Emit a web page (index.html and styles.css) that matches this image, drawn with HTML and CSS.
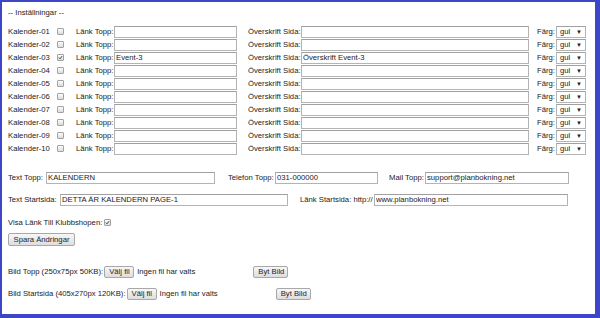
FILE: index.html
```html
<!doctype html>
<html lang="sv">
<head>
  <meta charset="utf-8" />
  <meta name="viewport" content="width=device-width,initial-scale=1" />
  <title>Inställningar</title>
  <link rel="stylesheet" href="styles.css">
</head>
<body>
  <div class="frame">
    <div class="heading">-- Inställningar --</div>

    <div class="cal-list">
      <div class="cal-row">
        <span class="cal-name">Kalender-01</span><span class="cb"></span>
        <span class="lbl lbl-link">Länk Topp:</span><input class="in in-link" type="text">
        <span class="lbl lbl-head">Överskrift Sida:</span><input class="in in-head" type="text">
        <span class="lbl lbl-color">Färg:</span><span class="sel">gul<span class="arrow">▼</span></span>
      </div>
      <div class="cal-row">
        <span class="cal-name">Kalender-02</span><span class="cb"></span>
        <span class="lbl lbl-link">Länk Topp:</span><input class="in in-link" type="text">
        <span class="lbl lbl-head">Överskrift Sida:</span><input class="in in-head" type="text">
        <span class="lbl lbl-color">Färg:</span><span class="sel">gul<span class="arrow">▼</span></span>
      </div>
      <div class="cal-row">
        <span class="cal-name">Kalender-03</span><span class="cb checked"><svg viewBox="0 0 8 8"><path d="M1.5 4.2 L3.2 6 L6.6 1.8" /></svg></span>
        <span class="lbl lbl-link">Länk Topp:</span><input class="in in-link" type="text" value="Event-3">
        <span class="lbl lbl-head">Överskrift Sida:</span><input class="in in-head" type="text" value="Överskrift Event-3">
        <span class="lbl lbl-color">Färg:</span><span class="sel">gul<span class="arrow">▼</span></span>
      </div>
      <div class="cal-row">
        <span class="cal-name">Kalender-04</span><span class="cb"></span>
        <span class="lbl lbl-link">Länk Topp:</span><input class="in in-link" type="text">
        <span class="lbl lbl-head">Överskrift Sida:</span><input class="in in-head" type="text">
        <span class="lbl lbl-color">Färg:</span><span class="sel">gul<span class="arrow">▼</span></span>
      </div>
      <div class="cal-row">
        <span class="cal-name">Kalender-05</span><span class="cb"></span>
        <span class="lbl lbl-link">Länk Topp:</span><input class="in in-link" type="text">
        <span class="lbl lbl-head">Överskrift Sida:</span><input class="in in-head" type="text">
        <span class="lbl lbl-color">Färg:</span><span class="sel">gul<span class="arrow">▼</span></span>
      </div>
      <div class="cal-row">
        <span class="cal-name">Kalender-06</span><span class="cb"></span>
        <span class="lbl lbl-link">Länk Topp:</span><input class="in in-link" type="text">
        <span class="lbl lbl-head">Överskrift Sida:</span><input class="in in-head" type="text">
        <span class="lbl lbl-color">Färg:</span><span class="sel">gul<span class="arrow">▼</span></span>
      </div>
      <div class="cal-row">
        <span class="cal-name">Kalender-07</span><span class="cb"></span>
        <span class="lbl lbl-link">Länk Topp:</span><input class="in in-link" type="text">
        <span class="lbl lbl-head">Överskrift Sida:</span><input class="in in-head" type="text">
        <span class="lbl lbl-color">Färg:</span><span class="sel">gul<span class="arrow">▼</span></span>
      </div>
      <div class="cal-row">
        <span class="cal-name">Kalender-08</span><span class="cb"></span>
        <span class="lbl lbl-link">Länk Topp:</span><input class="in in-link" type="text">
        <span class="lbl lbl-head">Överskrift Sida:</span><input class="in in-head" type="text">
        <span class="lbl lbl-color">Färg:</span><span class="sel">gul<span class="arrow">▼</span></span>
      </div>
      <div class="cal-row">
        <span class="cal-name">Kalender-09</span><span class="cb"></span>
        <span class="lbl lbl-link">Länk Topp:</span><input class="in in-link" type="text">
        <span class="lbl lbl-head">Överskrift Sida:</span><input class="in in-head" type="text">
        <span class="lbl lbl-color">Färg:</span><span class="sel">gul<span class="arrow">▼</span></span>
      </div>
      <div class="cal-row">
        <span class="cal-name">Kalender-10</span><span class="cb"></span>
        <span class="lbl lbl-link">Länk Topp:</span><input class="in in-link" type="text">
        <span class="lbl lbl-head">Överskrift Sida:</span><input class="in in-head" type="text">
        <span class="lbl lbl-color">Färg:</span><span class="sel">gul<span class="arrow">▼</span></span>
      </div>
    </div>

    <div class="row row-top">
      <span class="lbl w-texttop">Text Topp:</span><input class="in w-in-texttop" type="text" value="KALENDERN">
      <span class="lbl w-phone">Telefon Topp:</span><input class="in w-in-phone" type="text" value="031-000000">
      <span class="lbl w-mail">Mail Topp:</span><input class="in w-in-mail" type="text" value="support@planbokning.net">
    </div>

    <div class="row row-start">
      <span class="lbl w-textstart">Text Startsida:</span><input class="in w-in-textstart" type="text" value="DETTA ÄR KALENDERN PAGE-1">
      <span class="lbl w-linkstart">Länk Startsida: http://</span><input class="in w-in-linkstart" type="text" value="www.planbokning.net">
    </div>

    <div class="row row-shop">
      <span>Visa Länk Till Klubbshopen:</span><span class="cb checked"><svg viewBox="0 0 8 8"><path d="M1.5 4.2 L3.2 6 L6.6 1.8" /></svg></span>
    </div>

    <div class="row row-save">
      <button class="btn btn-save" type="button">Spara Ändringar</button>
    </div>

    <div class="row row-file first">
      <span>Bild Topp (250x75px 50KB):</span>
      <button class="btn btn-pick" type="button">Välj fil</button>
      <span class="nofile">Ingen fil har valts</span>
      <button class="btn btn-swap" type="button">Byt Bild</button>
    </div>

    <div class="row row-file second">
      <span>Bild Startsida (405x270px 120KB):</span>
      <button class="btn btn-pick" type="button">Välj fil</button>
      <span class="nofile">Ingen fil har valts</span>
      <button class="btn btn-swap" type="button">Byt Bild</button>
    </div>
  </div>
</body>
</html>
```

FILE: styles.css
```css
:root{
  --frame:#3d46c6;
  --text:#222;
  --line:#b4b4b4;
}
html,body{margin:0;height:100%;}
body{font-family:"Liberation Sans",Arial,sans-serif;font-size:7.7px;color:var(--text);background:#fff;}

.frame{
  box-sizing:border-box;width:600px;height:318px;
  border-style:solid;border-color:var(--frame);border-width:2px 5px 4px 2px;
  padding:6px 0 0 6px;background:#fff;
}
.heading{line-height:10px;height:10px;}

.cal-list{margin-top:7px;}
.cal-row,.row{display:flex;align-items:center;height:13px;white-space:nowrap;}
.lbl{display:inline-block;}

.cal-name{width:49px;}
.lbl-link{width:38px;margin-left:12px;}
.lbl-head{width:53px;margin-left:11px;}
.lbl-color{width:19px;margin-left:8px;}

.in{
  box-sizing:border-box;height:12px;margin:0;padding:0 1px;
  border:1px solid var(--line);border-top-color:#a0a0a0;
  font:inherit;color:var(--text);background:#fff;
}
.in-link{width:123px;}
.in-head{width:228px;}

.sel{
  box-sizing:border-box;width:30px;height:12px;display:inline-flex;align-items:center;
  justify-content:space-between;padding:0 3px 0 3px;
  border:1px solid var(--line);border-top-color:#a0a0a0;background:#fff;
}
.arrow{font-size:6px;color:#222;}

.cb{
  box-sizing:border-box;width:7px;height:7px;display:inline-flex;align-items:center;justify-content:center;
  border:1px solid #a2a2a2;border-radius:1px;background:linear-gradient(#fdfdfd,#dcdcdc);
}
.cb svg{width:7px;height:7px;}
.cb path{fill:none;stroke:#222;stroke-width:1.4;}

/* lower form */
.row-top{margin-top:16px;}
.w-texttop{width:38px;}
.w-in-texttop{width:169px;}
.w-phone{width:47px;margin-left:13px;}
.w-in-phone{width:103px;}
.w-mail{width:36px;margin-left:11px;}
.w-in-mail{width:144px;}

.row-start{margin-top:9px;}
.w-textstart{width:52px;}
.w-in-textstart{width:228px;}
.w-linkstart{width:74px;margin-left:12px;}
.w-in-linkstart{width:194px;}

.row-shop{margin-top:10px;}
.row-shop .cb{margin-left:2px;}

.row-save{margin-top:4px;}

.btn{
  box-sizing:border-box;height:12px;margin:0;padding:0 4px;
  font:inherit;color:var(--text);line-height:10px;
  border:1px solid #a8a8a8;border-radius:2px;background:linear-gradient(#f7f7f7,#dddddd);
}
.btn-save{width:67px;height:13px;}
.btn-pick{width:30px;margin-left:1px;}
.nofile{margin-left:3px;}
.btn-swap{width:35px;margin-left:58px;}

.row-file.first{margin-top:19px;}
.row-file.second{margin-top:9px;}
```
